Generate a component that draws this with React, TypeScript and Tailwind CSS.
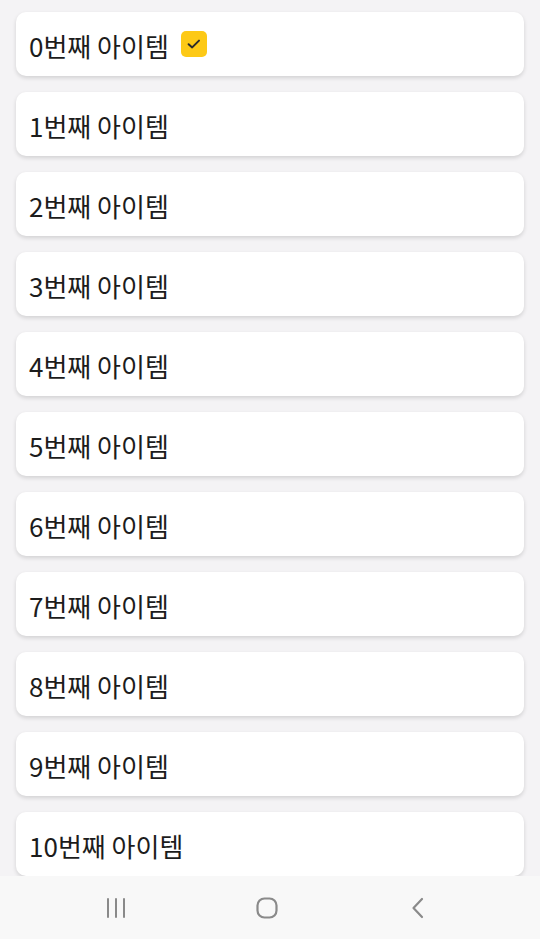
const items = Array.from({ length: 11 }, (_, i) => i);

const CheckBadge = () => (
  <span className="mb-[3px] ml-[12px] flex h-[26px] w-[26px] items-center justify-center rounded-[5px] bg-[#fdc916]">
    <svg width="18" height="18" viewBox="0 0 18 18" fill="none">
      <path
        d="M3.6 9.2 L7.2 12.4 L14 5.6"
        stroke="#2a2a2a"
        strokeWidth="2"
        strokeLinecap="round"
        strokeLinejoin="round"
      />
    </svg>
  </span>
);

const NavBar = () => (
  <div className="flex h-[63px] shrink-0 items-center bg-[#f8f8f8] pl-[104px]">
    <svg width="22" height="22" viewBox="0 0 22 22">
      <rect x="3" y="1" width="2" height="20" rx="1" fill="#8a8a8a" />
      <rect x="11" y="1" width="2" height="20" rx="1" fill="#8a8a8a" />
      <rect x="19" y="1" width="2" height="20" rx="1" fill="#8a8a8a" />
    </svg>
    <svg className="ml-[130px]" width="22" height="22" viewBox="0 0 22 22">
      <rect x="1.5" y="1.5" width="19" height="19" rx="7" fill="none" stroke="#8a8a8a" strokeWidth="2.2" />
    </svg>
    <svg className="ml-[133px]" width="14" height="22" viewBox="0 0 14 22">
      <path d="M11 2 L2.5 11 L11 20" fill="none" stroke="#8a8a8a" strokeWidth="2.2" strokeLinecap="round" strokeLinejoin="round" />
    </svg>
  </div>
);

export default function App() {
  return (
    <div
      className="flex h-[939px] w-[540px] flex-col overflow-hidden bg-[#f4f3f5]"
      style={{ fontFamily: '"Noto Sans CJK KR", "Noto Sans", sans-serif' }}
    >
      <div className="flex flex-1 flex-col gap-4 overflow-hidden px-4 pt-3">
        {items.map((i) => (
          <div
            key={i}
            className="flex h-16 shrink-0 items-center rounded-[10px] bg-white px-[13px] pt-[3px] shadow-[0_2px_4px_rgba(0,0,0,0.14)]"
          >
            <span className="text-[26px] leading-none text-[#1c1c1c]">{i}번째 아이템</span>
            {i === 0 && <CheckBadge />}
          </div>
        ))}
      </div>
      <NavBar />
    </div>
  );
}
